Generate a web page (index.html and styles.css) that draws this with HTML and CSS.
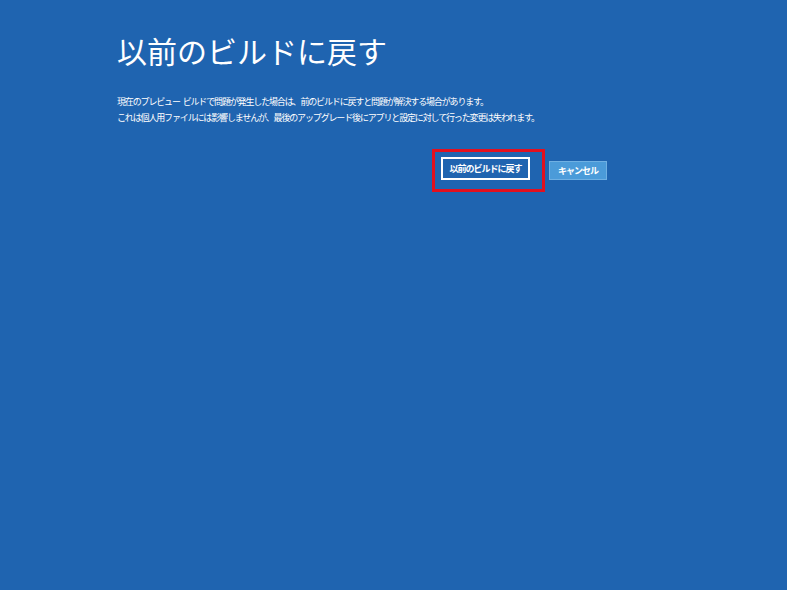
FILE: index.html
```html
<!DOCTYPE html>
<html lang="ja">
<head>
<meta charset="utf-8">
<title>以前のビルドに戻す</title>
<link rel="stylesheet" href="styles.css">
</head>
<body>
<main class="page">
  <h1 class="title">以前のビルドに戻す</h1>
  <div class="desc">
    <p>現在のプレビュー ビルドで問題が発生した場合は、前のビルドに戻すと問題が解決する場合があります。</p>
    <p>これは個人用ファイルには影響しませんが、最後のアップグレード後にアプリと設定に対して行った変更は失われます。</p>
  </div>
  <div class="actions">
    <div class="highlight">
      <button class="btn btn-primary">以前のビルドに戻す</button>
    </div>
    <button class="btn btn-cancel">キャンセル</button>
  </div>
</main>
</body>
</html>
```

FILE: styles.css
```css
html, body {
  margin: 0;
  padding: 0;
  height: 100%;
}
body {
  background: #1f64b0;
  color: #ffffff;
  font-family: "Noto Sans CJK JP", "Noto Sans", sans-serif;
}
.page {
  width: 490px;
  padding: 0 0 0 117px;
}
.title {
  margin: 0;
  padding-top: 31px;
  font-size: 30px;
  line-height: 38px;
  font-weight: 400;
  letter-spacing: 0;
  white-space: nowrap;
}
.desc {
  margin-top: 25px;
  font-size: 9px;
  line-height: 16px;
  letter-spacing: -1.15px;
  word-spacing: 2px;
  white-space: nowrap;
}
.desc p {
  margin: 0;
}
.actions {
  margin-top: 23px;
  display: flex;
  justify-content: flex-end;
  align-items: center;
  gap: 4px;
}
.highlight {
  border: 3px solid #e3101e;
  padding: 5px 12px 9px 6px;
  display: flex;
}
.btn {
  font-family: "Noto Sans CJK JP", "Noto Sans", sans-serif;
  font-size: 9px;
  font-weight: 700;
  letter-spacing: -1px;
  color: #ffffff;
  padding: 0;
  margin: 0;
  cursor: pointer;
  line-height: 1;
}
.btn-primary {
  width: 89px;
  height: 23px;
  background: #1f64b0;
  border: 2px solid #ffffff;
}
.btn-cancel {
  width: 58px;
  height: 19px;
  background: #4b9bd9;
  border: 1px solid #6fb0e3;
}
```
